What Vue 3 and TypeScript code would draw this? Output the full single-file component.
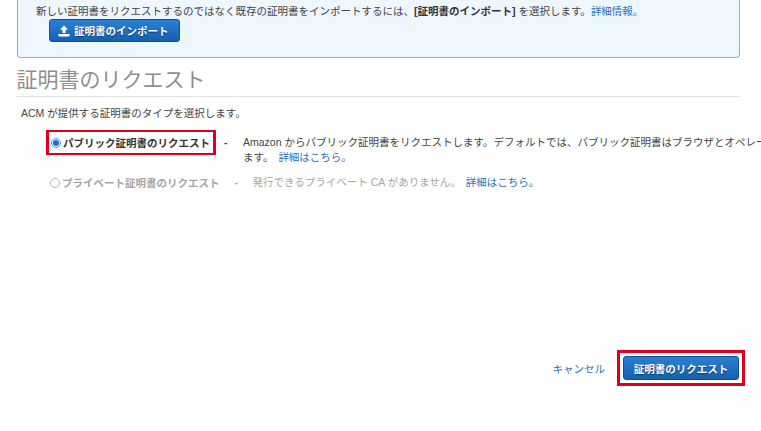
<script setup lang="ts">
const title = '証明書のリクエスト'
</script>

<template>
  <div class="page">
    <section class="panel">
      <p class="panel-text">新しい証明書をリクエストするのではなく既存の証明書をインポートするには、<b>[証明書のインポート]</b> を選択します。<a class="link">詳細情報。</a></p>
      <button class="btn import-btn" type="button">
        <svg class="upload" viewBox="0 0 12 12" width="12" height="12" aria-hidden="true">
          <path d="M6 0.5 L10 4.8 H7.6 V8 H4.4 V4.8 H2 Z M0.5 9 H11.5 V11.5 H0.5 Z" fill="#fff" />
        </svg>
        証明書のインポート
      </button>
    </section>

    <h1 class="heading">{{ title }}</h1>
    <p class="intro">ACM が提供する証明書のタイプを選択します。</p>

    <div class="option first">
      <label class="choice highlighted">
        <span class="radio checked"></span>
        <b>パブリック証明書のリクエスト</b>
      </label>
      <span class="dash">-</span>
      <p class="desc">Amazon からパブリック証明書をリクエストします。デフォルトでは、パブリック証明書はブラウザとオペレー<br />ます。 <a class="link spaced">詳細はこちら。</a></p>
    </div>

    <div class="option second">
      <label class="choice disabled">
        <span class="radio"></span>
        <b>プライベート証明書のリクエスト</b>
      </label>
      <span class="dash disabled">-</span>
      <p class="desc disabled">発行できるプライベート CA がありません。 <a class="link spaced">詳細はこちら。</a></p>
    </div>

    <div class="actions">
      <a class="link cancel">キャンセル</a>
      <div class="highlight-box">
        <button class="btn submit-btn" type="button">証明書のリクエスト</button>
      </div>
    </div>
  </div>
</template>

<style>
html, body { margin: 0; background: #fff; }
</style>

<style scoped>
.page {
  width: 761px;
  height: 431px;
  overflow: hidden;
  display: flex;
  flex-direction: column;
  font-family: "Liberation Sans", "Noto Sans CJK JP", sans-serif;
  font-size: 10.5px;
  color: #444;
}
p { margin: 0; }
.link { color: #2f6fb8; }
.spaced { margin-left: 2px; }
.panel {
  box-sizing: border-box;
  height: 58px;
  margin: 0 21px 0 16.5px;
  padding: 4px 18.5px 0;
  background: #eef6fe;
  border: 1px solid #86aedb;
  border-top: none;
  border-radius: 0 0 4px 4px;
  flex: none;
}
.panel-text { line-height: 14px; white-space: nowrap; }
.panel-text b { color: #333; }
.btn {
  display: flex;
  align-items: center;
  justify-content: center;
  box-sizing: border-box;
  border: 1px solid #15508f;
  border-radius: 3px;
  background: linear-gradient(#2b80d3, #1460b0);
  color: #fff;
  font: bold 10.5px "Liberation Sans", "Noto Sans CJK JP", sans-serif;
  text-shadow: 0 1px 1px rgba(0, 0, 0, 0.5);
  padding: 0;
}
.import-btn {
  width: 131px;
  height: 23px;
  margin: 1px 0 0 13px;
  gap: 4px;
  justify-content: flex-start;
  padding-left: 8px;
}
.upload { flex: none; }
.heading {
  margin: 7px 21px 0 16.5px;
  height: 31px;
  border-bottom: 1px solid #e2e2e2;
  font-size: 21px;
  line-height: 30px;
  font-weight: 400;
  color: #8f8f8f;
  flex: none;
}
.intro { margin: 9px 0 0 21px; line-height: 14px; flex: none; }
.option {
  display: flex;
  align-items: flex-start;
  white-space: nowrap;
  flex: none;
}
.option > * { flex: none; }
.first { margin: 10px 0 0 46px; }
.second { margin: 10px 0 0 50px; }
.choice {
  display: flex;
  align-items: center;
  gap: 2px;
  box-sizing: border-box;
  font-size: 10.5px;
}
.highlighted {
  width: 170px;
  height: 25px;
  padding-left: 2px;
  border: 3px solid #e0001b;
  border-width: 2px 3px;
  color: #333;
}
.radio {
  box-sizing: border-box;
  width: 10px;
  height: 10px;
  flex: none;
  border: 1px solid #bbb;
  border-radius: 50%;
  background: #fff;
}
.radio.checked {
  border-color: #4a90e2;
  background: radial-gradient(circle, #1a6fe0 0 2.8px, #fff 3.3px);
}
.dash { line-height: 25px; margin-left: 8px; font-weight: 700; width: 19px; }
.desc { line-height: 15px; padding-top: 5px; }
.second .choice { height: 15px; }
.second .dash { line-height: 15px; margin-left: 15px; width: 18px; }
.second .desc { padding-top: 0; line-height: 15px; }
.disabled { color: #a6a6a6; }
.actions {
  margin: auto 16px 45px 0;
  display: flex;
  align-items: center;
  justify-content: flex-end;
  gap: 12px;
  flex: none;
}
.cancel { font-size: 10.5px; }
.highlight-box {
  box-sizing: border-box;
  width: 128px;
  height: 36px;
  border: 3px solid #e0001b;
  padding: 3px;
}
.submit-btn { width: 100%; height: 100%; }
</style>
